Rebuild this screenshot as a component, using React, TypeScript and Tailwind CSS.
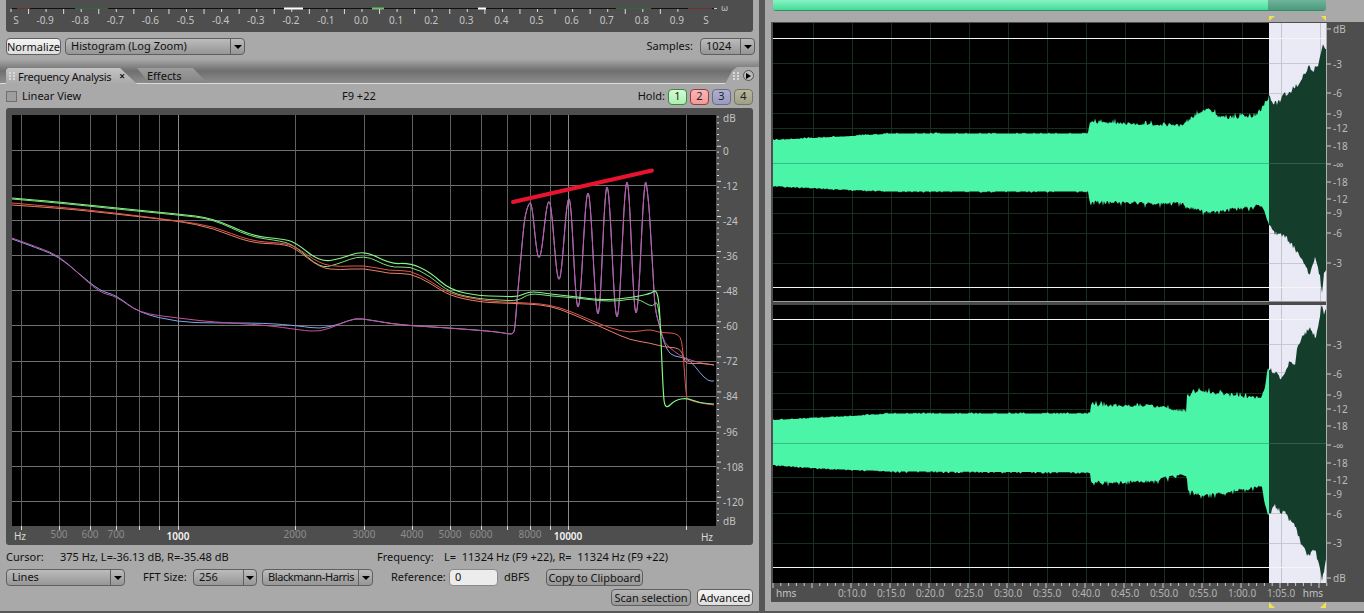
import React from "react";

type P = [number, number];

const str = (p: P[]) => p.map(([x, y]) => `${x},${y}`).join(" ");

function smooth(p: P[]) {
  let d = `M${p[0][0]} ${p[0][1]}`;
  for (let i = 1; i < p.length - 1; i++) {
    const mx = (p[i][0] + p[i + 1][0]) / 2;
    const my = (p[i][1] + p[i + 1][1]) / 2;
    d += ` Q${p[i][0]} ${p[i][1]} ${mx} ${my}`;
  }
  const e = p[p.length - 1];
  return `${d} L${e[0]} ${e[1]}`;
}

function interp(p: P[], x: number) {
  if (x <= p[0][0]) return p[0][1];
  for (let i = 1; i < p.length; i++) {
    if (x <= p[i][0]) {
      const [a, b] = p[i - 1];
      const [c, d] = p[i];
      return b + ((d - b) * (x - a)) / (c - a || 1);
    }
  }
  return p[p.length - 1][1];
}

function rng(seed: number) {
  let s = seed;
  return () => {
    s = (s * 1664525 + 1013904223) % 4294967296;
    return s / 4294967296;
  };
}

function amp(x: number, r: () => number) {
  const q = r();
  if (x < 885) return q < 0.25 ? 0.9 : 0;
  if (x < 1089) return q < 0.2 ? 1.6 : 0.4;
  if (x < 1265) return q < 0.22 ? 3 + 4.5 * r() : q * 4;
  return q < 0.25 ? 5 : q * 3;
}

function wave(top: P[], bot: P[], seed: number) {
  const r = rng(seed);
  const t: P[] = [];
  const b: P[] = [];
  for (let x = 773; x <= 1326; x++) {
    t.push([x, +(interp(top, x) - amp(x, r)).toFixed(1)]);
    b.push([x, +(interp(bot, x) + amp(x, r)).toFixed(1)]);
  }
  const part = (lo: number, hi: number) =>
    str([...t.filter((q) => q[0] >= lo && q[0] <= hi), ...b.filter((q) => q[0] >= lo && q[0] <= hi).reverse()]);
  return { a: part(773, 1269), b: part(1269, 1326) };
}

const top1: P[] = [[773, 140], [813, 138], [852, 136], [885, 134], [1088, 134], [1090, 125], [1150, 127], [1182, 128], [1187, 124], [1195, 118], [1203, 113], [1210, 112], [1220, 120], [1240, 120], [1255, 118], [1260, 114], [1266, 104], [1269, 100], [1274, 106], [1278, 106], [1285, 97], [1290, 97], [1292, 92], [1298, 87], [1305, 77], [1309, 70], [1312, 75], [1318, 67], [1323, 47], [1326, 52]];
const bot1: P[] = [[773, 186], [813, 188], [852, 190], [885, 191], [1088, 191], [1090, 199], [1150, 201], [1182, 201], [1188, 205], [1210, 210], [1240, 205], [1262, 203], [1267, 218], [1269, 223], [1275, 230], [1285, 233], [1295, 246], [1305, 263], [1310, 271], [1315, 256], [1320, 273], [1322, 288], [1324, 270], [1326, 268]];
const top2: P[] = [[773, 420], [813, 418], [852, 416], [885, 414], [1080, 414], [1090, 414], [1091, 408], [1150, 408], [1170, 411], [1186, 414], [1187, 399], [1200, 392], [1215, 396], [1240, 399], [1262, 400], [1265, 388], [1267, 374], [1269, 372], [1275, 375], [1280, 382], [1285, 375], [1290, 364], [1295, 367], [1298, 347], [1303, 340], [1310, 330], [1316, 342], [1320, 318], [1322, 307], [1324, 317], [1326, 310]];
const bot2: P[] = [[773, 465], [813, 468], [852, 470], [885, 471], [1090, 472], [1091, 480], [1150, 479], [1180, 472], [1187, 472], [1188, 488], [1200, 492], [1215, 491], [1262, 484], [1265, 503], [1268, 513], [1275, 503], [1280, 508], [1285, 510], [1290, 518], [1295, 522], [1300, 538], [1308, 553], [1315, 545], [1322, 576], [1326, 558]];

const w1 = wave(top1, bot1, 11);
const w2 = wave(top2, bot2, 29);

const peaks: P[] = [[530, 202], [539, 258], [549, 201], [559, 280], [569, 198], [578, 308], [588, 192], [598, 315], [607, 186], [617, 318], [627, 181], [636, 314], [646, 180]];
function sweep(): P[] {
  const out: P[] = [];
  for (let i = 0; i < peaks.length - 1; i++) {
    const [a, b] = peaks[i];
    const [c, d] = peaks[i + 1];
    for (let k = 0; k < 8; k++) {
      const f = (1 - Math.cos((Math.PI * k) / 8)) / 2;
      out.push([+(a + ((c - a) * k) / 8).toFixed(1), +(b + (d - b) * f).toFixed(1)]);
    }
  }
  out.push(peaks[peaks.length - 1]);
  return out;
}
const rise: P[] = [[513, 335], [515, 328], [517, 300], [520, 268], [524, 222], [527, 208]];
const fall: P[] = [[649, 205], [651, 240], [653, 273], [655, 310], [660, 327], [664, 343]];
const pink: P[] = [[12, 238], [40, 248], [59, 256], [77, 272], [100, 293], [116, 296], [139, 313], [178, 318], [212, 322], [265, 325], [300, 330], [320, 332], [340, 324], [355, 318], [370, 320], [400, 325], [450, 328], [500, 332], ...rise, ...sweep(), ...fall, [675, 352], [684, 358], [700, 363], [714, 365]];
const blue: P[] = [[12, 239], [40, 249], [59, 257], [77, 272], [100, 291], [116, 295], [139, 313], [178, 322], [212, 323], [265, 323], [300, 326], [320, 329], [340, 324], [355, 318], [370, 320], [400, 325], [450, 328], [500, 332], ...rise, ...sweep(), ...fall, [670, 355], [680, 357], [690, 360], [700, 373], [708, 381], [714, 381]];
const green1: P[] = [[12, 198], [59, 202], [116, 208], [178, 214], [213, 218], [252, 236], [282, 239], [295, 242], [320, 262], [340, 259], [364, 250], [390, 264], [410, 263], [430, 272], [450, 290], [480, 296], [500, 296], [518, 297], [530, 291], [550, 294], [578, 297], [600, 300], [620, 299], [640, 296], [652, 293], [655, 290], [658, 295], [660, 315], [663, 390], [665, 410], [675, 400], [687, 398], [700, 403], [714, 404]];
const green2: P[] = [[12, 199], [59, 203], [116, 209], [178, 215], [213, 219], [250, 237], [282, 241], [295, 246], [320, 268], [335, 265], [364, 254], [390, 268], [410, 266], [430, 276], [450, 293], [480, 299], [500, 300], [518, 301], [530, 293], [550, 296], [578, 298], [600, 301], [620, 301], [636, 298], [645, 303], [653, 307], [657, 300], [660, 320]];
const red1: P[] = [[12, 203], [59, 207], [116, 213], [178, 221], [213, 226], [250, 241], [282, 243], [295, 246], [320, 264], [340, 267], [364, 265], [390, 271], [410, 270], [430, 281], [450, 294], [480, 300], [500, 302], [530, 303], [550, 305], [570, 311], [590, 320], [610, 328], [630, 333], [650, 329], [660, 333], [680, 333], [683, 350], [686, 395], [688, 400], [700, 403], [714, 405]];
const red2: P[] = [[12, 205], [59, 208], [116, 214], [178, 221], [213, 228], [250, 243], [282, 244], [295, 248], [320, 268], [340, 270], [364, 268], [390, 274], [410, 273], [430, 283], [450, 296], [480, 302], [500, 303], [530, 304], [550, 306], [570, 313], [590, 322], [610, 331], [630, 340], [650, 343], [664, 347], [680, 348], [684, 358], [686, 364], [700, 363], [714, 365]];

const freqLines = [21, 59, 90, 116, 139, 159, 178, 295, 364, 412, 450, 481, 507, 530, 550, 568, 686];
const freqLabels: [string, number][] = [["500", 59], ["600", 90], ["700", 116], ["2000", 295], ["3000", 364], ["4000", 412], ["5000", 450], ["6000", 481], ["8000", 530]];
const dbLines = [150, 185, 220, 255, 290, 325, 361, 396, 431, 466, 501];
const dbLabels: [string, number][] = [["dB", 122], ["0", 155], ["-12", 190], ["-24", 225], ["-36", 260], ["-48", 295], ["-60", 330], ["-72", 365], ["-84", 400], ["-96", 436], ["-108", 471], ["-120", 506], ["dB", 525]];

const meterLabels = Array.from({ length: 19 }, (_, i) => {
  const v = (i - 9) / 10;
  return { t: v.toFixed(1), x: 361 + (i - 9) * 35.1 };
});

const timeX = Array.from({ length: 14 }, (_, i) => 813 + i * 39);
const timeLabels: [string, number][] = ["0:10.0", "0:15.0", "0:20.0", "0:25.0", "0:30.0", "0:35.0", "0:40.0", "0:45.0", "0:50.0", "0:55.0", "1:00.0", "1:05.0"].map((t, i) => [t, 852 + i * 39]);
const rulerLabels: [string, number][] = [["dB", 33], ["-3", 68], ["-6", 97], ["-9", 118], ["-12", 132], ["-18", 150], ["-∞", 168], ["-18", 186], ["-12", 203], ["-9", 217], ["-6", 237], ["-3", 267], ["-3", 349], ["-6", 378], ["-9", 399], ["-12", 413], ["-18", 430], ["-∞", 449], ["-18", 467], ["-12", 484], ["-9", 498], ["-6", 518], ["-3", 547], ["dB", 582]];
const gridY = [63, 93, 113, 128, 197, 213, 233, 263, 344, 372, 393, 409, 477, 492, 513, 543];

function Chevron() {
  return <span className="h-0 w-0 border-x-[4px] border-t-[4px] border-x-transparent border-t-black" />;
}

function Select({ label, width, arrow, text = "" }: { label: string; width: string; arrow: string; text?: string }) {
  return (
    <div className={`flex h-[17px] shrink-0 items-stretch rounded-[4px] border border-[#5f5f5f] bg-gradient-to-b from-[#bcbcbc] to-[#969696] ${width}`}>
      <span className={`flex-1 overflow-hidden whitespace-nowrap pl-[5px] leading-[14px] text-[#111] ${text}`}>{label}</span>
      <span className={`flex items-center justify-center border-l border-[#5f5f5f] ${arrow}`}>
        <Chevron />
      </span>
    </div>
  );
}

function Btn({ label, width, bright }: { label: string; width: string; bright?: boolean }) {
  return (
    <button className={`h-[17px] shrink-0 rounded-[4px] border border-[#5f5f5f] text-center leading-[14px] text-[#111] ${width} ${bright ? "bg-gradient-to-b from-[#f4f4f4] to-[#dedede]" : "bg-gradient-to-b from-[#b4b4b4] to-[#989898]"}`}>
      {label}
    </button>
  );
}

function Hold({ n, cls }: { n: string; cls: string }) {
  return (
    <span className={`flex h-[16px] w-[19px] items-center justify-center rounded-[4px] border text-[11px] text-[#222] ${cls}`}>{n}</span>
  );
}

function Grip() {
  return (
    <span className="grid w-[6px] shrink-0 grid-cols-2 gap-[1px]">
      {Array.from({ length: 6 }, (_, i) => (
        <span key={i} className="h-[2px] w-[2px] bg-[#d8d8d8]" />
      ))}
    </span>
  );
}

export default function App() {
  return (
    <div className="flex h-[613px] w-[1364px] overflow-hidden bg-[#a9a9a9] font-['Noto_Sans',sans-serif] text-[11px] text-[#111]">
      <div className="flex h-full w-[759px] shrink-0 flex-col">
        <div className="ml-[6px] h-[32px] w-[747px] rounded-b-[3px] bg-[#4e4e4e]">
          <svg width="747" height="32" viewBox="6 0 747 32" className="block" fontSize="10">
            <line x1="12" y1="8.5" x2="714" y2="8.5" stroke="#111" />
            <line x1="17" y1="8.5" x2="30" y2="8.5" stroke="#6e3030" />
            <line x1="75" y1="8.5" x2="108" y2="8.5" stroke="#2f6a36" />
            <line x1="284" y1="8.5" x2="303" y2="8.5" stroke="#fff" strokeWidth="2" />
            <line x1="372" y1="8.5" x2="384" y2="8.5" stroke="#6fbf6f" strokeWidth="2" />
            <line x1="478" y1="8.5" x2="486" y2="8.5" stroke="#fff" strokeWidth="2" />
            <line x1="616" y1="8.5" x2="651" y2="8.5" stroke="#2f6a36" />
            <line x1="688" y1="8.5" x2="712" y2="8.5" stroke="#6e3030" />
            {Array.from({ length: 39 }, (_, i) => 11 + i * 17.55).map((x, i) => (
              <line key={i} x1={x} y1="9" x2={x} y2={i % 2 ? 14 : 12} stroke="#ddd" />
            ))}
            {meterLabels.map((m) => (
              <text key={m.t} x={m.x} y="24" textAnchor="middle" fill="#c4c4c4">{m.t}</text>
            ))}
            <text x="16" y="24" textAnchor="middle" fill="#c4c4c4">S</text>
            <text x="706" y="24" textAnchor="middle" fill="#c4c4c4">S</text>
            <line x1="714" y1="8.5" x2="717" y2="8.5" stroke="#ccc" />
            <text x="721" y="11" fill="#c4c4c4" fontSize="9">ω</text>
          </svg>
        </div>

        <div className="mt-[6px] flex h-[17px] items-center pl-[6px] pr-[4px]">
          <Btn label="Normalize" width="w-[55px]" bright />
          <div className="ml-[4px]">
            <Select label="Histogram (Log Zoom)" width="w-[180px]" arrow="w-[14px]" />
          </div>
          <span className="ml-auto mr-[7px]">Samples:</span>
          <Select label="1024" width="w-[55px]" arrow="w-[14px]" />
        </div>

        <div className="mt-[4px] flex h-[25px] items-end border-b border-[#dcdcdc] bg-gradient-to-b from-[#a9a9a9] via-[#6f6f6f] to-[#8d8d8d]">
          <div className="-mb-px ml-[6px] flex h-[16px] w-[131px] items-center bg-gradient-to-b from-[#c4c4c4] to-[#a9a9a9] pl-[3px] [clip-path:polygon(0_2px,2px_0,114px_0,131px_100%,0_100%)]">
            <Grip />
            <span className="ml-[3px] whitespace-nowrap text-[11px] leading-none tracking-[-0.28px]">Frequency Analysis</span>
            <span className="ml-[8px] text-[10px] font-bold leading-none">×</span>
          </div>
          <div className="flex h-[15px] w-[70px] items-center bg-gradient-to-b from-[#9c9c9c] to-[#868686] pl-[10px] [clip-path:polygon(0_0,56px_0,70px_100%,12px_100%)]">
            <span className="leading-none">Effects</span>
          </div>
          <div className="-mb-px ml-auto flex h-[17px] w-[34px] items-center bg-[#a9a9a9] pl-[8px] [clip-path:polygon(0_100%,7px_4px,12px_0,100%_0,100%_100%)]">
            <Grip />
            <span className="ml-[4px] flex h-[11px] w-[11px] items-center justify-center rounded-full border border-[#555] bg-[#bbb]">
              <span className="h-0 w-0 border-y-[3px] border-l-[5px] border-y-transparent border-l-black" />
            </span>
          </div>
        </div>

        <div className="mt-[4px] flex h-[17px] items-center pl-[6px] pr-[6px]">
          <span className="h-[11px] w-[11px] border border-[#6e6e6e] bg-[#9e9e9e]" />
          <span className="ml-[5px] w-[320px]">Linear View</span>
          <span>F9 +22</span>
          <span className="ml-auto mr-[3px]">Hold:</span>
          <div className="flex gap-[3px]">
            <Hold n="1" cls="border-[#3c8a46] bg-gradient-to-b from-[#d4fbd4] to-[#a9f0b0]" />
            <Hold n="2" cls="border-[#9b3a3a] bg-gradient-to-b from-[#fbb4b4] to-[#f09a9a]" />
            <Hold n="3" cls="border-[#6a6a8a] bg-gradient-to-b from-[#aeaed0] to-[#9a9ac0]" />
            <Hold n="4" cls="border-[#77775e] bg-gradient-to-b from-[#b8b89e] to-[#a0a088]" />
          </div>
        </div>

        <div className="ml-[6px] mt-[3px] h-[437px] w-[747px] rounded-[3px] bg-[#4e4e4e]">
          <svg width="747" height="437" viewBox="6 108 747 437" className="block" fontSize="10">
            <rect x="12" y="115" width="704" height="411" fill="#000" />
            {dbLines.map((y) => (
              <line key={y} x1="12" y1={y + 0.5} x2="716" y2={y + 0.5} stroke="#707070" />
            ))}
            {freqLines.map((x) => (
              <line key={x} x1={x + 0.5} y1="115" x2={x + 0.5} y2="526" stroke={x === 178 || x === 568 ? "#8a8a8a" : "#606060"} />
            ))}
            {freqLines.map((x) => (
              <line key={x} x1={x + 0.5} y1="526" x2={x + 0.5} y2="530" stroke="#ddd" />
            ))}
            {Array.from({ length: 70 }, (_, i) => 117 + i * 5.85).map((y, i) => (
              <line key={i} x1="717" y1={y} x2={i % 6 === 5 ? 721 : 719} y2={y} stroke="#ddd" />
            ))}
            <path d={smooth(blue)} fill="none" stroke="#7aa8e8" />
            <path d={smooth(pink)} fill="none" stroke="#c9509f" />
            <path d={smooth(green2)} fill="none" stroke="#7fe07f" />
            <path d={smooth(red2)} fill="none" stroke="#e8806a" />
            <path d={smooth(red1)} fill="none" stroke="#e0584a" />
            <path d={smooth(green1)} fill="none" stroke="#86f486" strokeWidth="1.2" />
            <line x1="513" y1="202" x2="652" y2="170.5" stroke="#e8142f" strokeWidth="4" strokeLinecap="round" />
            {dbLabels.map(([t, y], i) => (
              <text key={i} x="723" y={y} fill="#c4c4c4">{t}</text>
            ))}
            <text x="20" y="540" textAnchor="middle" fill="#d8d8d8">Hz</text>
            {freqLabels.map(([t, x]) => (
              <text key={t} x={x} y="538" textAnchor="middle" fill="#8c8c8c">{t}</text>
            ))}
            <text x="178" y="540" textAnchor="middle" fill="#f4f4f4" fontWeight="600">1000</text>
            <text x="568" y="540" textAnchor="middle" fill="#f4f4f4" fontWeight="600">10000</text>
            <text x="707" y="541" textAnchor="middle" fill="#d8d8d8">Hz</text>
          </svg>
        </div>

        <div className="mt-[4px] flex h-[16px] items-center pl-[6px]">
          <span className="w-[54px]">Cursor:</span>
          <span className="w-[317px]">375 Hz, L=-36.13 dB, R=-35.48 dB</span>
          <span className="w-[67px]">Frequency:</span>
          <span className="whitespace-pre">L=  11324 Hz (F9 +22), R=  11324 Hz (F9 +22)</span>
        </div>

        <div className="mt-[4px] flex h-[17px] items-center pl-[6px]">
          <Select label="Lines" width="w-[119px]" arrow="w-[14px]" />
          <span className="ml-[18px] w-[50px]">FFT Size:</span>
          <Select label="256" width="w-[64px]" arrow="w-[13px]" />
          <div className="ml-[5px]">
            <Select label="Blackmann-Harris" width="w-[111px]" arrow="w-[14px]" text="tracking-[-0.4px]" />
          </div>
          <span className="ml-[18px] w-[58px]">Reference:</span>
          <span className="flex h-[17px] w-[49px] items-center rounded-[4px] border border-[#8a8a8a] bg-[#ececec] pl-[5px]">0</span>
          <span className="ml-[6px] w-[42px]">dBFS</span>
          <Btn label="Copy to Clipboard" width="w-[97px]" />
        </div>

        <div className="mt-[3px] flex h-[17px] justify-end gap-[6px] pr-[6px]">
          <Btn label="Scan selection" width="w-[80px]" />
          <Btn label="Advanced" width="w-[56px]" bright />
        </div>

        <div className="mt-auto h-[2px] bg-[#575757]" />
      </div>

      <div className="h-full w-[6px] shrink-0 bg-[#575757]" />

      <div className="flex h-full flex-1 flex-col">
        <div className="h-[22px] shrink-0 pl-[8px]">
          <div className="flex h-[11px] w-[553px] overflow-hidden rounded-b-[3px] border-b border-[#2f8f68]">
            <div className="flex-1 bg-gradient-to-b from-[#86f3c4] to-[#3fdc98]" />
            <div className="w-[58px] bg-gradient-to-b from-[#6fb39a] to-[#4c9a7e]" />
          </div>
          <svg width="553" height="6" viewBox="773 16 553 6" className="mt-[5px] block">
            <polygon points="1269,16 1275,16 1269,21" fill="#f4e04a" />
            <polygon points="1321,16 1326,16 1326,21" fill="#f4e04a" />
          </svg>
        </div>

        <div className="ml-[6px] h-[580px] shrink-0 bg-[#4e4e4e]">
          <svg width="593" height="580" viewBox="771 22 593 580" className="block" fontSize="10">
            <rect x="773" y="23" width="496" height="560" fill="#000" />
            <rect x="1269" y="23" width="57" height="560" fill="#e9eaf5" />
            {gridY.map((y) => (
              <g key={y}>
                <line x1="773" y1={y + 0.5} x2="1269" y2={y + 0.5} stroke="#17301d" />
                <line x1="1269" y1={y + 0.5} x2="1326" y2={y + 0.5} stroke="#c8c8d0" />
              </g>
            ))}
            {timeX.map((x) => (
              <line key={x} x1={x + 0.5} y1="23" x2={x + 0.5} y2="583" stroke={x > 1269 ? "#c4c4cc" : "#17301d"} />
            ))}
            {[38, 287, 319, 567].map((y) => (
              <line key={y} x1="773" y1={y + 0.5} x2="1326" y2={y + 0.5} stroke="#f4f4f4" />
            ))}
            <polygon points={w1.a} fill="#4af5a8" />
            <polygon points={w1.b} fill="#143d2b" />
            <polygon points={w2.a} fill="#4af5a8" />
            <polygon points={w2.b} fill="#143d2b" />
            <line x1="773" y1="163.5" x2="1269" y2="163.5" stroke="#3cb98a" />
            <line x1="1269" y1="163.5" x2="1326" y2="163.5" stroke="#2a5f48" />
            <line x1="773" y1="443.5" x2="1269" y2="443.5" stroke="#3cb98a" />
            <line x1="1269" y1="443.5" x2="1326" y2="443.5" stroke="#2a5f48" />
            <rect x="773" y="301" width="553" height="1" fill="#9a9a9a" />
            <rect x="773" y="302" width="553" height="3" fill="#4a4a4a" />
            <line x1="1326.5" y1="23" x2="1326.5" y2="583" stroke="#b0b0b0" />
            {rulerLabels.map(([t, y], i) => (
              <g key={i}>
                <line x1="1327" y1={y - 4} x2="1331" y2={y - 4} stroke="#ccc" />
                <text x="1333" y={y} fill="#bcbcbc">{t}</text>
              </g>
            ))}
            {Array.from({ length: 72 }, (_, i) => 773 + i * 7.8).map((x, i) => (
              <line key={i} x1={x} y1="583" x2={x} y2={i % 5 === 0 ? 588 : 586} stroke="#ccc" />
            ))}
            <text x="776" y="597" fill="#c4c4c4">hms</text>
            {timeLabels.map(([t, x]) => (
              <text key={t} x={x} y="597" textAnchor="middle" fill="#b4b4b4">{t}</text>
            ))}
            <text x="1313" y="597" textAnchor="middle" fill="#c4c4c4">hms</text>
          </svg>
        </div>

        <div className="h-[9px] shrink-0 pl-[8px]">
          <svg width="553" height="7" viewBox="773 602 553 7" className="block">
            <polygon points="1269,602 1275,608 1269,608" fill="#f4e04a" />
            <polygon points="1326,602 1326,608 1320,608" fill="#f4e04a" />
          </svg>
        </div>
        <div className="h-[2px] shrink-0 bg-[#575757]" />
      </div>
    </div>
  );
}
